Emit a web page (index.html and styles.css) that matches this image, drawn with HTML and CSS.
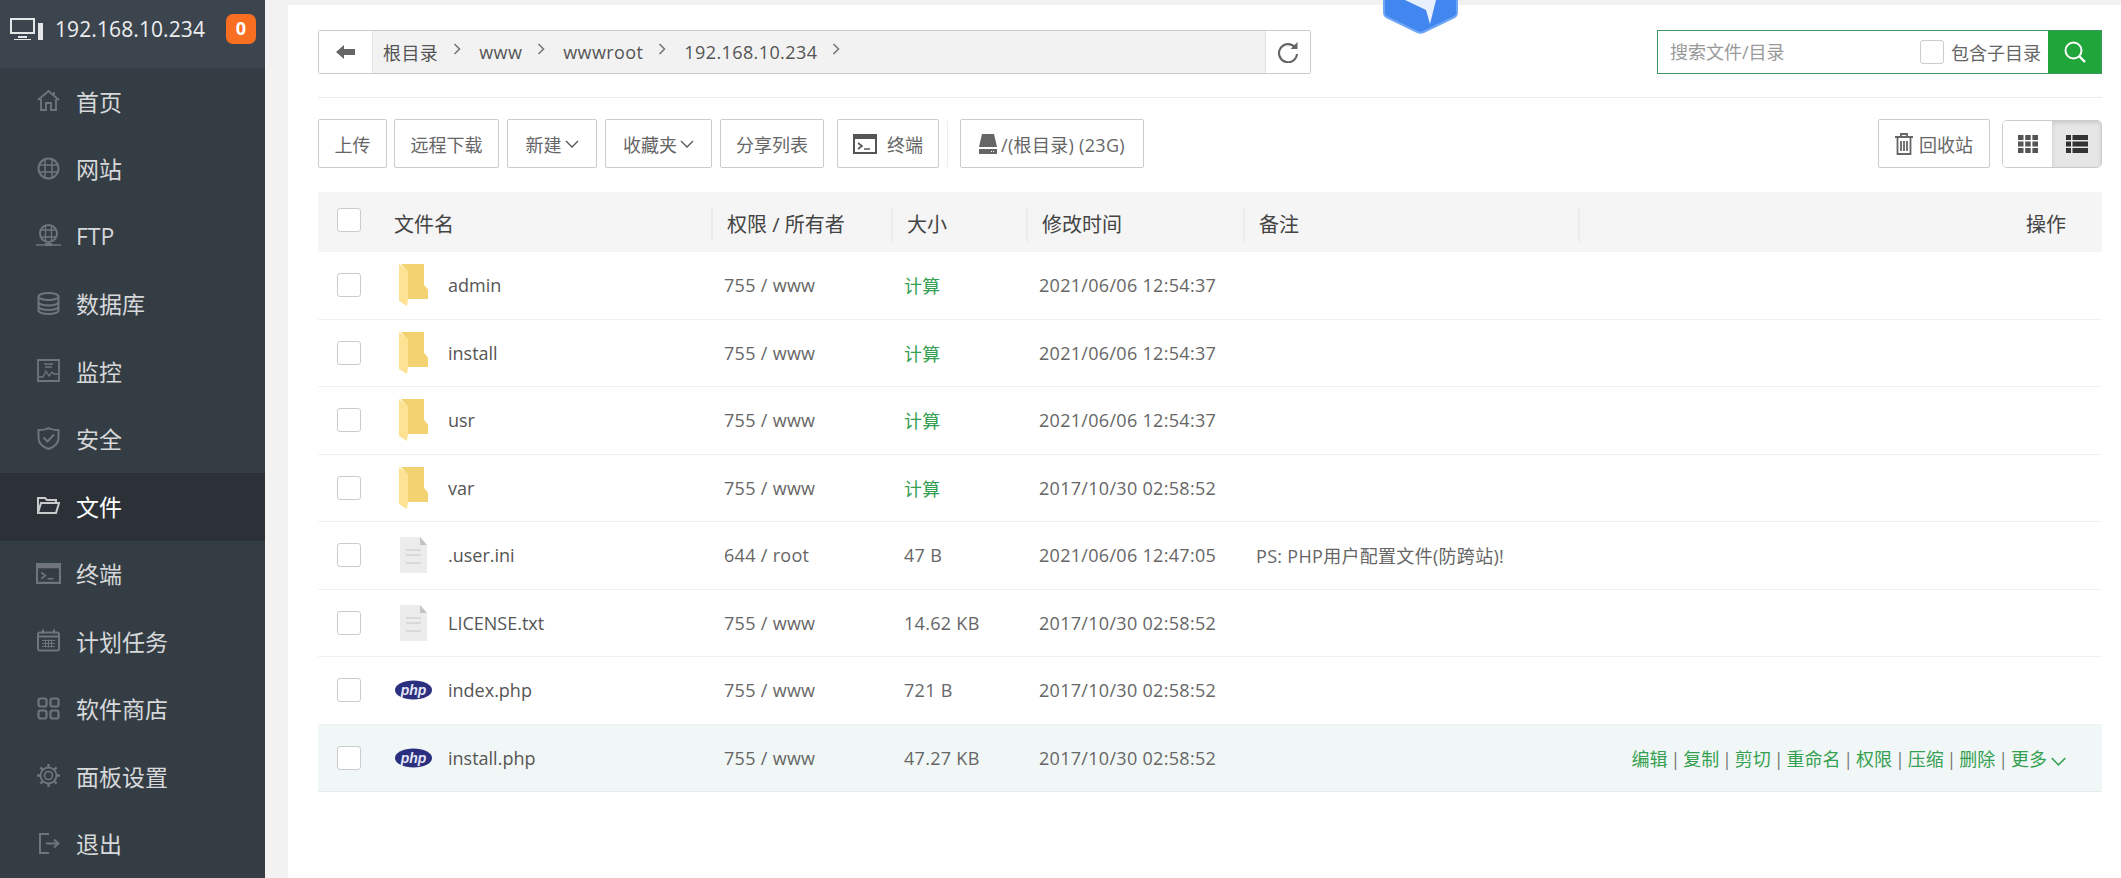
FILE: index.html
```html
<!DOCTYPE html>
<html lang="zh-CN">
<head>
    <meta charset="UTF-8">
    <title>文件管理</title>
    <link rel="stylesheet" href="styles.css">
</head>
<body>
    <svg class="defs" width="0" height="0">
        <defs>
            <symbol id="i-folder" viewBox="0 0 29 42">
                <path d="M2 0H25V21L27 23 29 26V35H9V8Z" fill="#f3d272"/>
                <path d="M0 0 9 7V35L8 42 0 37Z" fill="#fde294"/>
            </symbol>
            <symbol id="i-file" viewBox="0 0 27 36">
                <path d="M0 0H20L27 8V36H0Z" fill="#ececec"/>
                <path d="M20 0 27 8H20Z" fill="#c4c4c4"/>
                <path d="M6 13H21M6 18H21M6 26H21" stroke="#d2d2d2" stroke-width="1.5"/>
            </symbol>
            <symbol id="i-php" viewBox="0 0 37 20">
                <ellipse cx="18.5" cy="10" rx="18.5" ry="9.5" fill="#2b2f7f"/>
                <text x="18.5" y="14.500" text-anchor="middle" class="php-text">php</text>
            </symbol>
            <symbol id="i-term" viewBox="0 0 24 20">
                <path d="M1 1H23V19H1Z" fill="none" stroke="currentColor" stroke-width="2"/>
                <path d="M1 1H23V5H1Z" fill="currentColor"/>
                <path d="M5 9 9 12 5 15M11 15H17" fill="none" stroke="currentColor" stroke-width="1.6"/>
            </symbol>
            <symbol id="i-caret" viewBox="0 0 14 8">
                <path d="M1 1 7 7 13 1" fill="none" stroke="currentColor" stroke-width="1.3"/>
            </symbol>
            <symbol id="i-chev" viewBox="0 0 8 12">
                <path d="M1.5 1 6.5 6 1.5 11" fill="none" stroke="#777" stroke-width="1.6"/>
            </symbol>
        </defs>
    </svg>

    <aside class="sidebar">
        <div class="side-head">
            <svg class="side-pc" viewBox="0 0 33 22">
                <path d="M1 1H24V15H1Z" fill="none" stroke="#e4e6e8" stroke-width="2"/>
                <path d="M8 18H17V20H8Z" fill="#e4e6e8"/>
                <path d="M28 5H33V22H28Z" fill="#e4e6e8"/>
                <path d="M4 21H21V22H4Z" fill="#e4e6e8"/>
            </svg>
            <span class="side-ip">192.168.10.234</span>
            <span class="side-badge">0</span>
        </div>
        <ul class="side-menu">
            <li class="side-item">
                <svg class="side-icon" viewBox="0 0 23 23"><path d="M1 11 11.500 2 22 11M4 10V21H9V14H14V21H19V10M17 3V6" fill="none" stroke="currentColor" stroke-width="1.800"/></svg>
                首页
            </li>
            <li class="side-item">
                <svg class="side-icon" viewBox="0 0 23 23"><circle cx="11.500" cy="11.500" r="10" fill="none" stroke="currentColor" stroke-width="2"/><path d="M2 8H21M2 15H21M8 2V21M15 2V21" stroke="currentColor" stroke-width="1.500"/></svg>
                网站
            </li>
            <li class="side-item">
                <svg class="side-icon side-icon-wide" viewBox="0 0 25 23"><circle cx="12.500" cy="9.500" r="8.500" fill="none" stroke="currentColor" stroke-width="2"/><path d="M5 6H20M5 13H20M9.500 2V17M15.500 2V17" stroke="currentColor" stroke-width="1.300"/><path d="M0 21H25" stroke="currentColor" stroke-width="1.500"/><path d="M9 19H16V22H9Z" fill="currentColor"/></svg>
                FTP
            </li>
            <li class="side-item">
                <svg class="side-icon" viewBox="0 0 23 23"><ellipse cx="11.500" cy="4.500" rx="10" ry="3.500" fill="none" stroke="currentColor" stroke-width="2"/><path d="M1.500 4.500V18.500C1.500 20.500 6 22 11.500 22S21.500 20.500 21.500 18.500V4.500M1.500 10C1.500 12 6 13.500 11.500 13.500S21.500 12 21.500 10M1.500 14.500C1.500 16.500 6 18 11.500 18S21.500 16.500 21.500 14.500" fill="none" stroke="currentColor" stroke-width="2"/></svg>
                数据库
            </li>
            <li class="side-item">
                <svg class="side-icon" viewBox="0 0 23 23"><path d="M1 1H22V22H1Z" fill="none" stroke="currentColor" stroke-width="1.800"/><path d="M2 18H6L9 12 12 17 15 13 17 15H21M7 5H16M8 8H15" fill="none" stroke="currentColor" stroke-width="1.300"/></svg>
                监控
            </li>
            <li class="side-item">
                <svg class="side-icon" viewBox="0 0 23 23"><path d="M1.500 3C5 3 9 2.500 11.500 1 14 2.500 18 3 21.500 3V11C21.500 16 17 20 11.500 22 6 20 1.500 16 1.500 11Z" fill="none" stroke="currentColor" stroke-width="2"/><path d="M6.500 10.500 10.500 14.500 17 7.500" fill="none" stroke="currentColor" stroke-width="2"/></svg>
                安全
            </li>
            <li class="side-item is-active">
                <svg class="side-icon" viewBox="0 0 23 19"><path d="M1 17V2H8L10 4H19V6M1 17 4 7H22L19 17Z" fill="none" stroke="currentColor" stroke-width="2"/></svg>
                文件
            </li>
            <li class="side-item">
                <svg class="side-icon side-icon-wide" viewBox="0 0 24 20"><use href="#i-term"/></svg>
                终端
            </li>
            <li class="side-item">
                <svg class="side-icon" viewBox="0 0 23 22"><rect x="1" y="3" width="21" height="18" rx="2" fill="none" stroke="currentColor" stroke-width="2"/><path d="M1 7H22M6 0V4M17 0V4" stroke="currentColor" stroke-width="2"/><path d="M5 11H18M5 14H18M5 17H18M8.500 10V18M11.500 10V18M14.500 10V18" stroke="currentColor"/></svg>
                计划任务
            </li>
            <li class="side-item">
                <svg class="side-icon" viewBox="0 0 23 23"><g fill="none" stroke="currentColor" stroke-width="2.200"><rect x="1.500" y="1.500" width="8" height="8" rx="2"/><rect x="13.500" y="1.500" width="8" height="8" rx="2"/><rect x="1.500" y="13.500" width="8" height="8" rx="2"/><rect x="13.500" y="13.500" width="8" height="8" rx="2"/></g></svg>
                软件商店
            </li>
            <li class="side-item">
                <svg class="side-icon" viewBox="0 0 23 23"><circle cx="11.500" cy="11.500" r="4" fill="none" stroke="currentColor" stroke-width="1.600"/><circle cx="11.500" cy="11.500" r="8" fill="none" stroke="currentColor" stroke-width="1.800"/><path d="M11.500 0V4M11.500 19V23M0 11.500H4M19 11.500H23M3.400 3.400 6 6M17 17 19.600 19.600M3.400 19.600 6 17M17 6 19.600 3.400" stroke="currentColor" stroke-width="2.400"/></svg>
                面板设置
            </li>
            <li class="side-item">
                <svg class="side-icon" viewBox="0 0 23 23"><path d="M12 2H3V21H12M9 11.500H21M17 7.500 21.500 11.500 17 15.500" fill="none" stroke="currentColor" stroke-width="2"/></svg>
                退出
            </li>
        </ul>
    </aside>

    <main class="main">
        <svg class="float-logo" viewBox="0 0 75 34">
            <path d="M0 0H75V13Q75 16 72 18L41 33Q37.500 34.500 34 33L3 18Q0 16 0 13Z" fill="#6fa5f5"/>
            <path d="M2 0H73V13Q73 15 71 16L40 31Q37.500 32 35 31L4 16Q2 15 2 13Z" fill="#4286f0"/>
            <path d="M22 0 43 10 47 24 53 0Z" fill="#e8f0fd"/>
        </svg>
        <div class="panel">
            <div class="path-row">
                <div class="path-bar">
                    <button class="path-back">
                        <svg viewBox="0 0 20 16" width="20" height="16"><path d="M0 8 8 1V5H19V11H8V15Z" fill="#666"/></svg>
                    </button>
                    <div class="crumbs">
                        <span class="crumb">根目录</span><svg class="crumb-sep"><use href="#i-chev"/></svg>
                        <span class="crumb">www</span><svg class="crumb-sep"><use href="#i-chev"/></svg>
                        <span class="crumb">wwwroot</span><svg class="crumb-sep"><use href="#i-chev"/></svg>
                        <span class="crumb">192.168.10.234</span><svg class="crumb-sep"><use href="#i-chev"/></svg>
                    </div>
                    <button class="path-refresh">
                        <svg viewBox="0 0 22 22" width="22" height="22"><path d="M18 6.500A9 9 0 1 0 20 13" fill="none" stroke="#666" stroke-width="2.200"/><path d="M20.500 1V8H13.500Z" fill="#666"/></svg>
                    </button>
                </div>
                <div class="search-box">
                    <input class="search-input" type="text" placeholder="搜索文件/目录">
                    <input class="check" type="checkbox">
                    <span class="search-label">包含子目录</span>
                    <button class="search-btn">
                        <svg viewBox="0 0 24 24" width="24" height="24"><circle cx="10.500" cy="10.500" r="8" fill="none" stroke="#fff" stroke-width="2"/><path d="M16 16 22 22" stroke="#fff" stroke-width="2.400"/></svg>
                    </button>
                </div>
            </div>

            <div class="tool-row">
                <button class="btn btn-upload">上传</button>
                <button class="btn btn-remote">远程下载</button>
                <button class="btn btn-new">新建<svg class="caret"><use href="#i-caret"/></svg></button>
                <button class="btn btn-fav">收藏夹<svg class="caret"><use href="#i-caret"/></svg></button>
                <button class="btn btn-share">分享列表</button>
                <button class="btn btn-term"><svg class="term-icon"><use href="#i-term"/></svg>终端</button>
                <span class="tool-split"></span>
                <button class="btn btn-disk">
                    <svg viewBox="0 0 18 20" width="18" height="20"><path d="M3 0H15L18 13H0Z" fill="#666"/><path d="M0 15H18V20H0Z" fill="#666"/><path d="M12 17.500H16" stroke="#fff" stroke-dasharray="1 1"/></svg>
                    /(根目录) (23G)
                </button>
                <button class="btn btn-recycle">
                    <svg viewBox="0 0 18 22" width="18" height="22"><path d="M0 4H18M6 4V1H12V4M2.500 4V21H15.500V4M6 8V18M9 8V18M12 8V18" fill="none" stroke="#666" stroke-width="1.800"/></svg>
                    回收站
                </button>
                <div class="view-switch">
                    <button class="view-btn">
                        <svg viewBox="0 0 20 18" width="20" height="18"><path d="M0 0H5.500V5H0ZM7.200 0H12.700V5H7.200ZM14.400 0H20V5H14.400ZM0 6.500H5.500V11.500H0ZM7.200 6.500H12.700V11.500H7.200ZM14.400 6.500H20V11.500H14.400ZM0 13H5.500V18H0ZM7.200 13H12.700V18H7.200ZM14.400 13H20V18H14.400Z" fill="#555"/></svg>
                    </button>
                    <button class="view-btn is-on">
                        <svg viewBox="0 0 22 18" width="22" height="18"><path d="M0 0H5V5H0ZM6.500 0H22V5H6.500ZM0 6.500H5V11.500H0ZM6.500 6.500H22V11.500H6.500ZM0 13H5V18H0ZM6.500 13H22V18H6.500Z" fill="#333"/></svg>
                    </button>
                </div>
            </div>

            <div class="file-table">
                <div class="file-head">
                    <div class="cell-check"><input class="check" type="checkbox"></div>
                    <div class="th">文件名</div>
                    <div class="th th-line">权限 / 所有者</div>
                    <div class="th th-line">大小</div>
                    <div class="th th-line">修改时间</div>
                    <div class="th th-line">备注</div>
                    <div class="th th-line th-op">操作</div>
                </div>

                <div class="file-row">
                    <div class="cell-check"><input class="check" type="checkbox"></div>
                    <div class="cell-name"><svg class="ico-folder"><use href="#i-folder"/></svg>admin</div>
                    <div class="td">755 / www</div>
                    <div class="td td-calc">计算</div>
                    <div class="td">2021/06/06 12:54:37</div>
                    <div class="td"></div>
                    <div class="td"></div>
                </div>
                <div class="file-row">
                    <div class="cell-check"><input class="check" type="checkbox"></div>
                    <div class="cell-name"><svg class="ico-folder"><use href="#i-folder"/></svg>install</div>
                    <div class="td">755 / www</div>
                    <div class="td td-calc">计算</div>
                    <div class="td">2021/06/06 12:54:37</div>
                    <div class="td"></div>
                    <div class="td"></div>
                </div>
                <div class="file-row">
                    <div class="cell-check"><input class="check" type="checkbox"></div>
                    <div class="cell-name"><svg class="ico-folder"><use href="#i-folder"/></svg>usr</div>
                    <div class="td">755 / www</div>
                    <div class="td td-calc">计算</div>
                    <div class="td">2021/06/06 12:54:37</div>
                    <div class="td"></div>
                    <div class="td"></div>
                </div>
                <div class="file-row">
                    <div class="cell-check"><input class="check" type="checkbox"></div>
                    <div class="cell-name"><svg class="ico-folder"><use href="#i-folder"/></svg>var</div>
                    <div class="td">755 / www</div>
                    <div class="td td-calc">计算</div>
                    <div class="td">2017/10/30 02:58:52</div>
                    <div class="td"></div>
                    <div class="td"></div>
                </div>
                <div class="file-row">
                    <div class="cell-check"><input class="check" type="checkbox"></div>
                    <div class="cell-name"><svg class="ico-file"><use href="#i-file"/></svg>.user.ini</div>
                    <div class="td">644 / root</div>
                    <div class="td">47 B</div>
                    <div class="td">2021/06/06 12:47:05</div>
                    <div class="td">PS: PHP用户配置文件(防跨站)!</div>
                    <div class="td"></div>
                </div>
                <div class="file-row">
                    <div class="cell-check"><input class="check" type="checkbox"></div>
                    <div class="cell-name"><svg class="ico-file"><use href="#i-file"/></svg>LICENSE.txt</div>
                    <div class="td">755 / www</div>
                    <div class="td">14.62 KB</div>
                    <div class="td">2017/10/30 02:58:52</div>
                    <div class="td"></div>
                    <div class="td"></div>
                </div>
                <div class="file-row">
                    <div class="cell-check"><input class="check" type="checkbox"></div>
                    <div class="cell-name"><svg class="ico-php"><use href="#i-php"/></svg>index.php</div>
                    <div class="td">755 / www</div>
                    <div class="td">721 B</div>
                    <div class="td">2017/10/30 02:58:52</div>
                    <div class="td"></div>
                    <div class="td"></div>
                </div>
                <div class="file-row is-hover">
                    <div class="cell-check"><input class="check" type="checkbox"></div>
                    <div class="cell-name"><svg class="ico-php"><use href="#i-php"/></svg>install.php</div>
                    <div class="td">755 / www</div>
                    <div class="td">47.27 KB</div>
                    <div class="td">2017/10/30 02:58:52</div>
                    <div class="td"></div>
                    <div class="td td-ops">
                        <a>编辑</a> | <a>复制</a> | <a>剪切</a> | <a>重命名</a> | <a>权限</a> | <a>压缩</a> | <a>删除</a> | <a>更多<svg class="caret caret-green"><use href="#i-caret"/></svg></a>
                    </div>
                </div>
            </div>
        </div>
    </main>
</body>
</html>
```

FILE: styles.css
```css
* {
    box-sizing: border-box;
}
html, body {
    height: 100%;
}
body {
    margin: 0;
    display: flex;
    overflow: hidden;
    background-color: #f2f2f2;
    color: #555;
    font-family: "Open Sans", "Noto Sans CJK SC", sans-serif;
    font-size: 18px;
}
button, input {
    font-family: inherit;
    font-size: inherit;
    color: inherit;
}
.defs {
    position: absolute;
}

/* sidebar */
.sidebar {
    width: 265px;
    flex-shrink: 0;
    background-color: #353d44;
}
.side-head {
    height: 68px;
    display: flex;
    align-items: center;
    padding: 0 9px 10px 10px;
    background-color: #3c444d;
    color: #eceef0;
}
.side-pc {
    width: 33px;
    height: 22px;
    margin-right: 12px;
}
.side-ip {
    flex: 1;
    font-size: 21px;
    letter-spacing: 0.1px;
}
.side-badge {
    width: 30px;
    height: 30px;
    line-height: 29px;
    text-align: center;
    border-radius: 7px;
    background-color: #f96f22;
    color: #fff;
    font-weight: bold;
    font-size: 18px;
}
.side-menu {
    list-style: none;
    margin: 0;
    padding: 0;
}
.side-item {
    height: 67.5px;
    display: flex;
    align-items: center;
    padding: 0 0 2px 37px;
    color: #d6d8da;
    font-size: 23px;
}
.side-icon {
    width: 23px;
    height: 23px;
    margin-right: 16px;
    color: #6f757b;
}
.side-icon-wide {
    width: 25px;
    margin-left: -1px;
    margin-right: 15px;
}
.side-item.is-active {
    background-color: #2c3138;
    color: #fff;
}
.side-item.is-active .side-icon {
    color: #c8cacc;
}

/* main area */
.main {
    flex: 1;
    min-width: 0;
    position: relative;
    padding: 5px 0 0 23px;
}
.panel {
    height: 100%;
    background-color: #fff;
    padding: 25px 19px 0 30px;
}
.float-logo {
    position: absolute;
    top: 0;
    left: 1118px;
    width: 75px;
    height: 34px;
}

/* path bar */
.path-row {
    display: flex;
    justify-content: space-between;
    height: 68px;
    border-bottom: 1px solid #ececec;
}
.path-bar {
    width: 993px;
    height: 44px;
    display: flex;
    border: 1px solid #ccc;
    border-radius: 2px;
    background-color: #f2f2f2;
}
.path-back,
.path-refresh {
    flex-shrink: 0;
    border: none;
    background-color: #fff;
    padding: 0;
    display: flex;
    align-items: center;
    justify-content: center;
}
.path-back {
    width: 54px;
    border-right: 1px solid #e2e2e2;
}
.path-refresh {
    width: 45px;
    border-left: 1px solid #e2e2e2;
}
.crumbs {
    flex: 1;
    display: flex;
    align-items: center;
    padding-left: 10px;
}
.crumb {
    color: #555;
    letter-spacing: 0.4px;
}
.crumb-sep {
    width: 8px;
    height: 12px;
    margin: 0 18px 6px 15px;
}

/* search */
.search-box {
    width: 445px;
    height: 44px;
    display: flex;
    align-items: center;
    border: 1px solid #3f9460;
    background-color: #fff;
}
.search-input {
    flex: 1;
    min-width: 0;
    height: 100%;
    border: none;
    outline: none;
    padding: 0 0 0 12px;
    background: transparent;
}
.search-input::placeholder {
    color: #999;
}
.search-box .check {
    margin-right: 7px;
}
.search-label {
    margin-right: 7px;
    color: #666;
}
.search-btn {
    width: 53px;
    height: 100%;
    border: none;
    padding: 0;
    background-color: #20a53a;
    display: flex;
    align-items: center;
    justify-content: center;
}
.check {
    appearance: none;
    width: 24px;
    height: 24px;
    margin: 0;
    flex-shrink: 0;
    background-color: #fff;
    border: 1px solid #ccc;
    border-radius: 3px;
}

/* toolbar */
.tool-row {
    height: 94px;
    display: flex;
    align-items: center;
    padding-bottom: 3px;
}
.btn {
    height: 49px;
    display: flex;
    align-items: center;
    justify-content: center;
    gap: 6px;
    padding: 0;
    border: 1px solid #ccc;
    border-radius: 2px;
    background-color: #fff;
    color: #666;
}
.btn-upload { width: 69px; margin-right: 7px; }
.btn-remote { width: 105px; margin-right: 8px; }
.btn-new { width: 90px; margin-right: 8px; gap: 3px; }
.btn-fav { width: 107px; margin-right: 8px; gap: 3px; }
.btn-share { width: 104px; margin-right: 13px; }
.btn-term { width: 102px; gap: 10px; }
.btn-disk { width: 184px; gap: 4px; letter-spacing: 0.3px; }
.btn-recycle { width: 112px; margin-left: auto; margin-right: 12px; }
.caret {
    width: 14px;
    height: 8px;
    color: #555;
}
.term-icon {
    width: 24px;
    height: 20px;
    color: #555;
}
.tool-split {
    width: 1px;
    height: 46px;
    margin: 0 12px 0 8px;
    background-color: #eee;
}
.view-switch {
    display: flex;
    width: 100px;
    height: 48px;
    border: 1px solid #ccc;
    border-radius: 5px;
    overflow: hidden;
}
.view-btn {
    flex: 1;
    border: none;
    padding: 0;
    background-color: #fff;
    display: flex;
    align-items: center;
    justify-content: center;
}
.view-btn.is-on {
    background-color: #e6e6e6;
    box-shadow: inset 0 2px 4px #00000020;
}

/* file table */
.file-head,
.file-row {
    display: grid;
    grid-template-columns: 76px 317px 180px 135px 217px 335px 1fr;
    align-items: center;
}
.file-head {
    height: 60px;
    background-color: #f5f5f5;
    color: #444;
    font-size: 20px;
    padding-top: 6px;
}
.th {
    height: 34px;
    line-height: 34px;
}
.th-line {
    padding-left: 14px;
    border-left: 2px solid #ececec;
}
.th-op {
    text-align: right;
    padding-right: 36px;
}
.cell-check {
    padding-left: 19px;
    display: flex;
}
.file-head .cell-check {
    margin-top: -10px;
}
.file-row {
    height: 67.5px;
    border-bottom: 1px solid #f1f1f1;
}
.cell-name {
    display: flex;
    align-items: center;
    color: #555;
    height: 100%;
}
.ico-folder {
    width: 29px;
    height: 42px;
    margin: 0 20px 0 5px;
}
.ico-file {
    width: 27px;
    height: 36px;
    margin: 0 21px 0 6px;
}
.ico-php {
    width: 37px;
    height: 20px;
    margin: 0 16px 0 1px;
}
.php-text {
    fill: #e4e6f5;
    font-family: "Liberation Sans", sans-serif;
    font-size: 14px;
    font-weight: bold;
    font-style: italic;
}
.td {
    padding-left: 13px;
    color: #666;
    letter-spacing: 0.3px;
}
.td-calc {
    color: #35a052;
}
.file-row.is-hover {
    background-color: #f1f7f6;
    border-bottom: 1px solid #e6ecea;
}
.td-ops {
    text-align: right;
    padding-right: 35px;
    color: #777;
    white-space: nowrap;
    letter-spacing: 0;
    word-spacing: -1.8px;
}
.td-ops a {
    color: #35a052;
}
.caret-green {
    color: #35a052;
    margin-left: 3px;
    width: 17px;
    height: 9px;
}
```
